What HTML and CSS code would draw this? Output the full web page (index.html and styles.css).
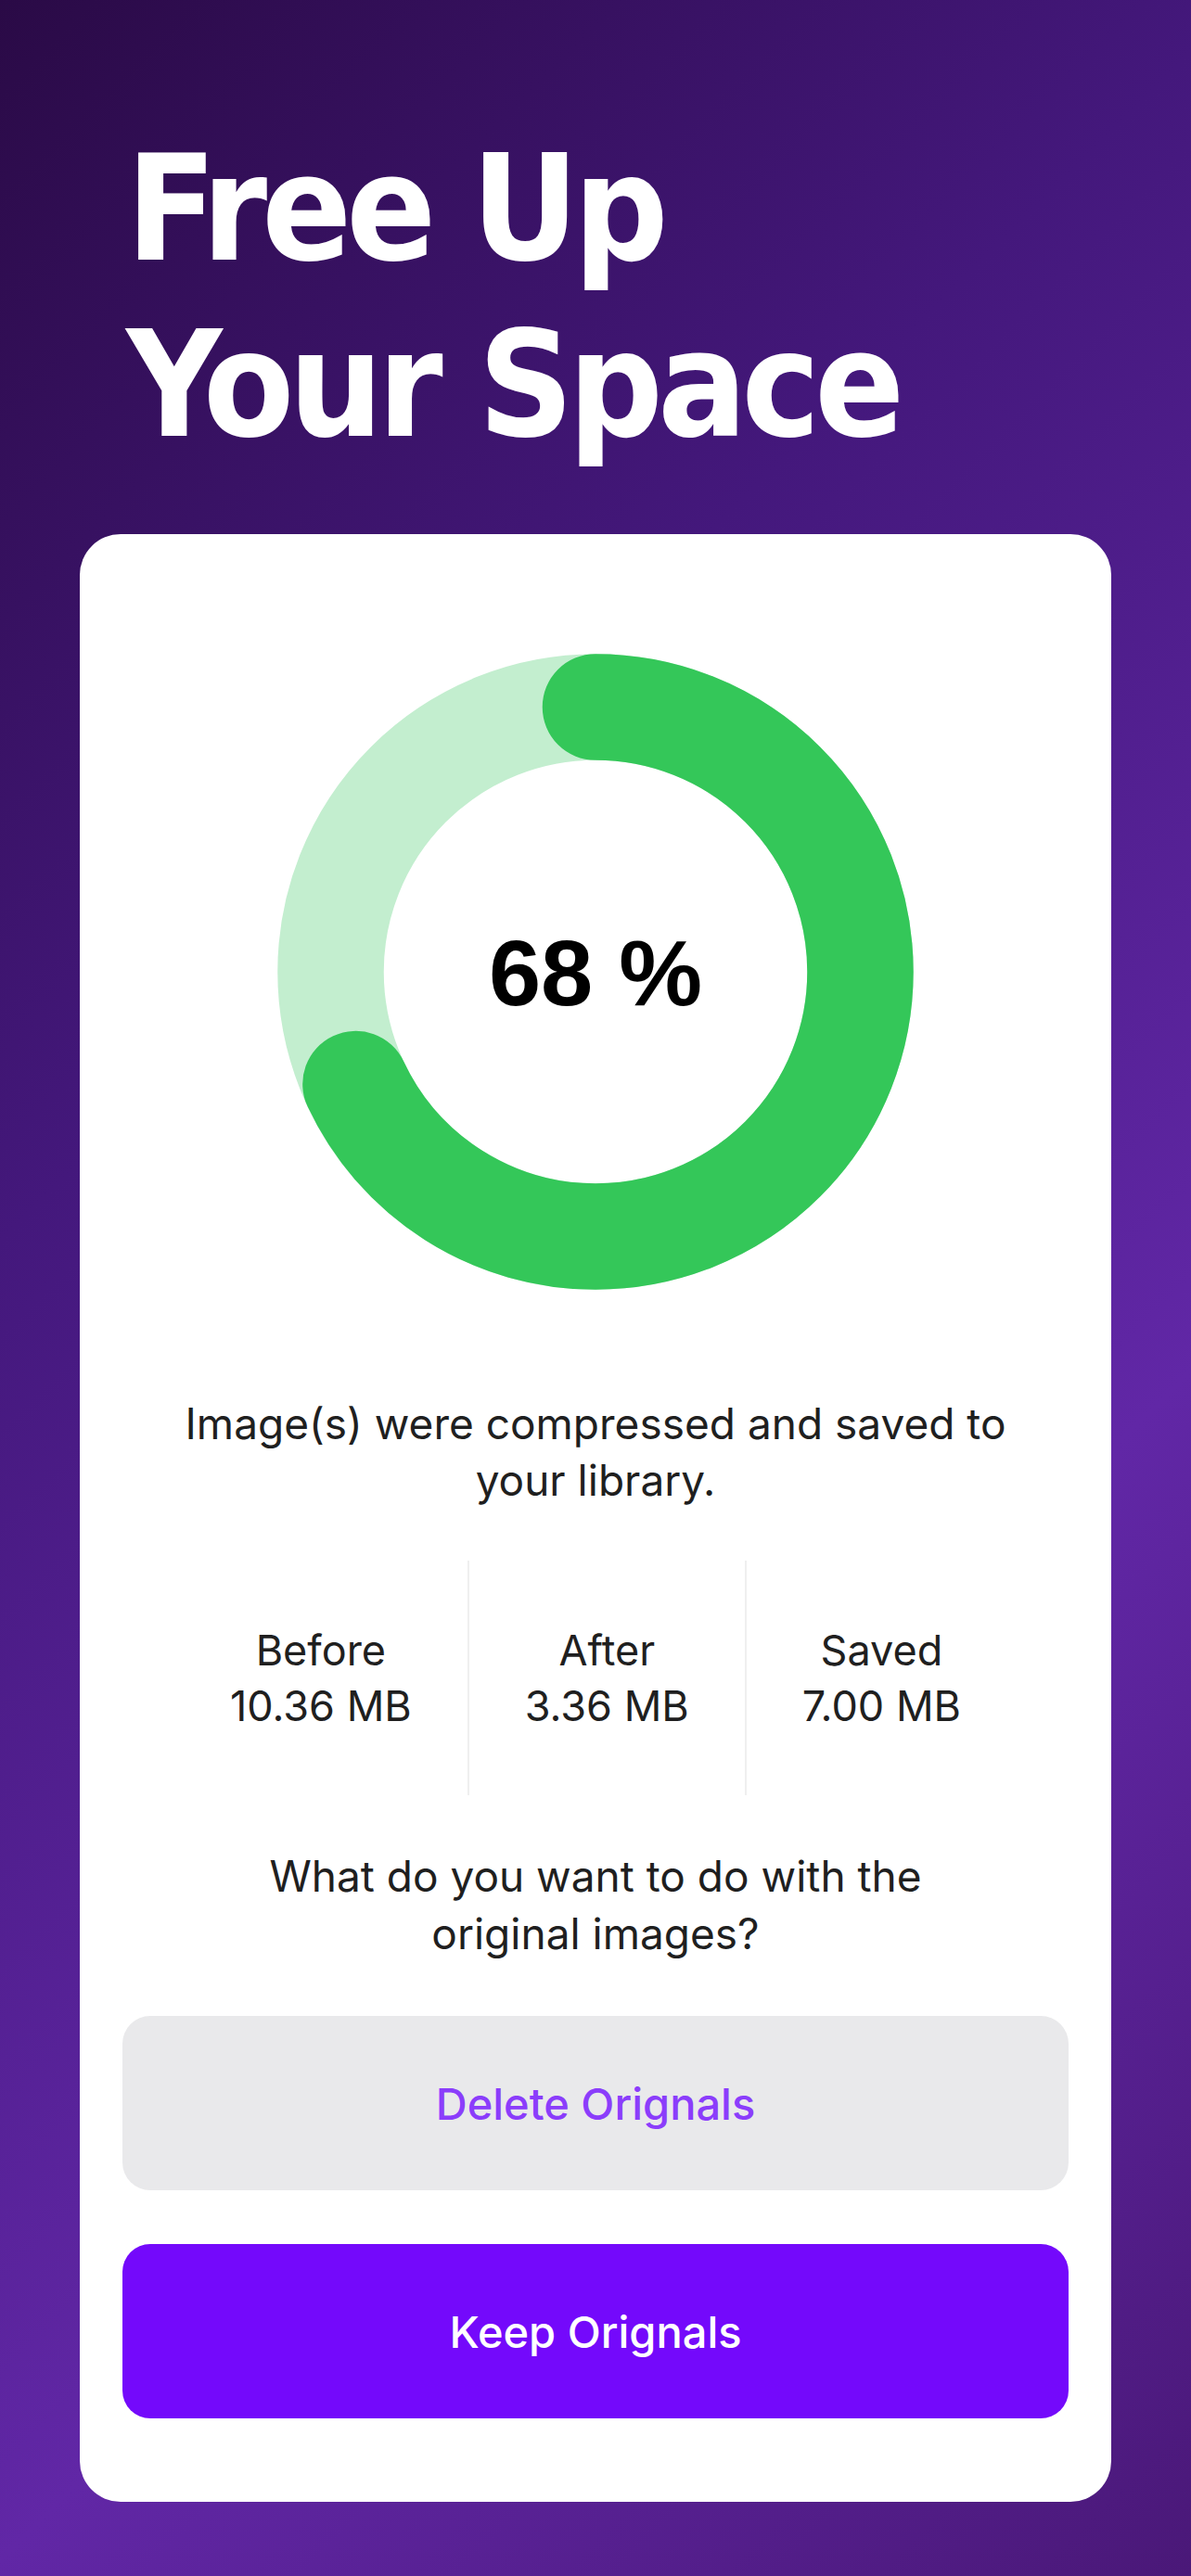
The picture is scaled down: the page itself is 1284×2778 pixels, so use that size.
FILE: index.html
```html
<!DOCTYPE html>
<html lang="en">
<head>
<meta charset="utf-8">
<title>Free Up Your Space</title>
<link rel="stylesheet" href="styles.css">
</head>
<body>
<main class="screen">
  <h1 class="title">Free Up<br>Your Space</h1>
  <section class="card">
    <svg class="donut" viewBox="0 0 686 686" width="686" height="686">
      <circle class="track" cx="343" cy="343" r="285.5"></circle>
      <circle class="progress" cx="343" cy="343" r="285.5" stroke-dasharray="1219.8 1793.8" transform="rotate(-90 343 343)"></circle>
      <text class="percent" x="343" y="379" text-anchor="middle">68 %</text>
    </svg>
    <p class="message">Image(s) were compressed and saved to<br>your library.</p>
    <div class="stats">
      <div class="stat">
        <span>Before</span>
        <span>10.36 MB</span>
      </div>
      <div class="stat">
        <span>After</span>
        <span>3.36 MB</span>
      </div>
      <div class="stat">
        <span>Saved</span>
        <span>7.00 MB</span>
      </div>
    </div>
    <p class="question">What do you want to do with the<br>original images?</p>
    <button class="btn btn-delete">Delete Orignals</button>
    <button class="btn btn-keep">Keep Orignals</button>
  </section>
</main>
</body>
</html>
```

FILE: styles.css
```css
html, body {
  margin: 0;
  padding: 0;
}

body {
  width: 1284px;
  min-height: 2778px;
  background: linear-gradient(135deg, #2a0a46 0%, #44187c 33%, #6127a6 68%, #4a1878 100%);
  font-family: "Inter", "Liberation Sans", sans-serif;
}

.screen {
  display: flex;
  flex-direction: column;
  padding: 130px 0 0 0;
}

.title {
  margin: 0 0 0 136px;
  font-family: "DejaVu Sans Condensed", "DejaVu Sans", sans-serif;
  font-stretch: condensed;
  font-weight: 700;
  font-size: 159px;
  line-height: 190px;
  letter-spacing: -6px;
  color: #ffffff;
}

.card {
  margin: 66px 0 0 86px;
  width: 1112px;
  box-sizing: border-box;
  height: 2122px;
  background: #ffffff;
  border-radius: 44px;
  padding: 129px 46px 90px 46px;
  display: flex;
  flex-direction: column;
  align-items: center;
}

.donut {
  display: block;
  flex: none;
}

.track {
  fill: none;
  stroke: #c3eecf;
  stroke-width: 114.5;
}

.progress {
  fill: none;
  stroke: #34c759;
  stroke-width: 114.5;
  stroke-linecap: round;
}

.percent {
  font-family: "Liberation Sans", Arial, sans-serif;
  font-weight: 700;
  font-size: 101px;
  fill: #000000;
}

.message,
.question {
  margin: 0;
  text-align: center;
  font-size: 46px;
  line-height: 61px;
  color: #1f1f1f;
}

.message {
  margin-top: 114px;
}

.stats {
  margin-top: 56px;
  height: 255px;
  display: flex;
  justify-content: center;
}

.stat {
  display: flex;
  flex-direction: column;
  justify-content: center;
  align-items: center;
  padding: 0 60px;
  font-size: 45px;
  line-height: 60px;
  color: #1f1f1f;
}

.stat + .stat {
  border-left: 2px solid #efefef;
}

.question {
  margin-top: 56px;
  line-height: 62px;
}

.btn {
  display: flex;
  align-items: center;
  justify-content: center;
  width: 100%;
  height: 188px;
  border: none;
  border-radius: 30px;
  font-family: "Inter", "Liberation Sans", sans-serif;
  font-size: 47px;
  font-weight: 500;
  padding: 0;
  flex: none;
}

.btn-delete {
  margin-top: 58px;
  background: #e9e9eb;
  color: #8b3dfb;
}

.btn-keep {
  margin-top: 58px;
  background: #7409fb;
  color: #ffffff;
}
```
